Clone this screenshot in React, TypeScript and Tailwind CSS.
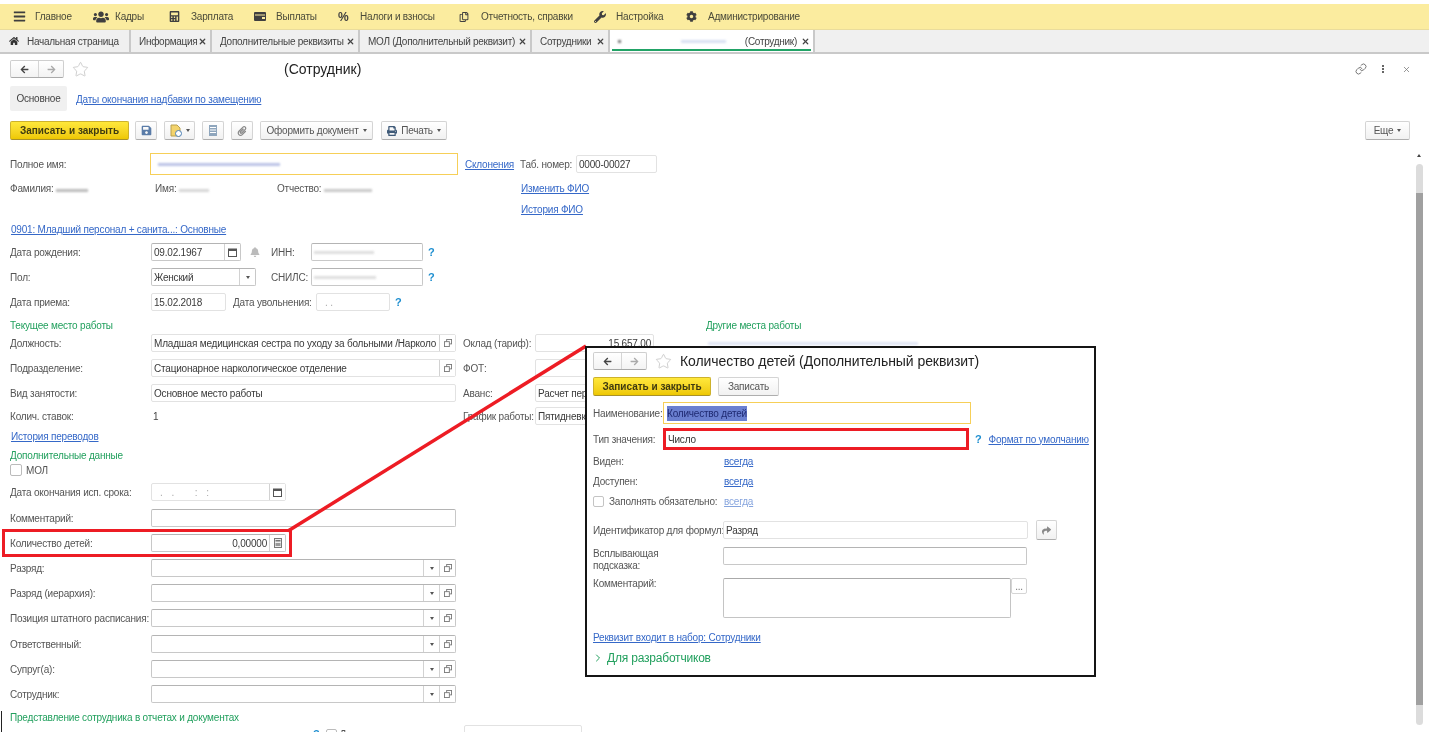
import React from "react";
import { FaBars, FaUsers, FaCalculator, FaRegCopy, FaWrench, FaCog, FaHome, FaArrowLeft, FaArrowRight, FaSave, FaPaperclip, FaPrint, FaBell, FaShare } from "react-icons/fa";
import { Star, Link as LinkIcon, X, ChevronRight } from "lucide-react";

function Caret() {
  return <span className="inline-block w-0 h-0 border-l-[2.5px] border-r-[2.5px] border-t-[3px] border-l-transparent border-r-transparent border-t-[#555]" />;
}
function CalIcon() {
  return (
    <svg width="9" height="9" viewBox="0 0 9 9"><rect x="0.5" y="1" width="8" height="7.5" fill="none" stroke="#555" /><rect x="0.5" y="1" width="8" height="2" fill="#555" /></svg>
  );
}
function CalcIcon() {
  return (
    <svg width="8" height="10" viewBox="0 0 8 10"><rect x="0.5" y="0.5" width="7" height="9" fill="#eee" stroke="#777" /><rect x="1.5" y="2" width="5" height="1.5" fill="#777" /><rect x="1.5" y="5" width="5" height="3" fill="#999" /></svg>
  );
}
function OpenIcon() {
  return (
    <svg width="8" height="8" viewBox="0 0 9 9"><rect x="3" y="0.5" width="5.5" height="5" fill="#fff" stroke="#777" /><rect x="0.5" y="3" width="5.5" height="5.5" fill="#fff" stroke="#777" /></svg>
  );
}
function Smudge({ w, c = "#c4c8d8" }: { w: number; c?: string }) {
  return <span className="inline-block h-[3px] blur-[1px] opacity-80" style={{ width: w, backgroundColor: c }} />;
}
function A({ children, className = "" }: { children: React.ReactNode; className?: string }) {
  return <span className={"underline text-[#3568c8] whitespace-nowrap " + className}>{children}</span>;
}
function Q({ className = "" }: { className?: string }) {
  return <span className={"text-[#1f8fd0] font-bold text-[11px] " + className}>?</span>;
}

function MenuItem({ icon, text, w }: { icon: React.ReactNode; text: string; w: number }) {
  return (
    <div className="flex items-center shrink-0" style={{ width: w }}>
      <span className="w-[22px] flex items-center text-[#3f3f3f]">{icon}</span>
      <span className="whitespace-nowrap">{text}</span>
    </div>
  );
}

function Tab({ children, w, x = true, active = false }: { children: React.ReactNode; w: number; x?: boolean; active?: boolean }) {
  return (
    <div className={"relative h-full flex items-center justify-between pl-[8px] pr-[3px] shrink-0 border-r-2 border-[#c9c9c9] whitespace-nowrap " + (active ? "bg-white" : "")} style={{ width: w }}>
      {children}
      {x && <X size={9} strokeWidth={3.2} className="text-[#444] shrink-0" />}
      {active && <span className="absolute left-[2px] right-[2px] bottom-[1px] h-[2px] bg-[#21a366]" />}
    </div>
  );
}

function Nav() {
  return (
    <div className="flex items-stretch w-[54px] h-[18px] rounded-[2px] border border-[#cfcfcf] border-b-[#aaa] bg-gradient-to-b from-white to-[#f3f3f3] shrink-0">
      <span className="w-[28px] flex items-center justify-center border-r border-[#d5d5d5]"><FaArrowLeft size={9} className="text-[#444]" /></span>
      <span className="flex-1 flex items-center justify-center"><FaArrowRight size={9} className="text-[#aaa]" /></span>
    </div>
  );
}

function Yellow({ w }: { w: number }) {
  return (
    <div className="h-[19px] flex items-center justify-center rounded-[2px] border border-[#cdb22c] border-b-[#a8912a] bg-gradient-to-b from-[#ffe83a] to-[#eec800] text-[10px] tracking-normal text-[#3f3b10] font-bold whitespace-nowrap shrink-0" style={{ width: w }}>
      Записать и закрыть
    </div>
  );
}

function Btn({ children, w, className = "" }: { children: React.ReactNode; w: number; className?: string }) {
  return (
    <div className={"h-[19px] flex items-center justify-center gap-[4px] rounded-[2px] border border-[#d4d4d4] border-b-[#aeaeae] bg-gradient-to-b from-white to-[#f1f1f1] text-[#555] whitespace-nowrap shrink-0 " + className} style={{ width: w }}>
      {children}
    </div>
  );
}

function Field({ w, children, dark = false, right = false, className = "", btns }: { w: number; children?: React.ReactNode; dark?: boolean; right?: boolean; className?: string; btns?: React.ReactNode[] }) {
  return (
    <div className={"h-[18px] flex items-stretch rounded-[2px] border bg-white shrink-0 " + (dark ? "border-[#c8c8c8] border-t-[#b4b4b4] " : "border-[#e2e2e2] ") + className} style={{ width: w }}>
      <div className={"flex-1 min-w-0 flex items-center overflow-hidden whitespace-nowrap px-[2px] text-[#3a3a3a] " + (right ? "justify-end" : "")}>{children}</div>
      {btns && btns.map((b, i) => (
        <div key={i} className="w-[16px] flex items-center justify-center border-l border-[#d2d2d2] bg-white shrink-0">{b}</div>
      ))}
    </div>
  );
}

function Row({ label, children, mt = 7 }: { label?: string; children?: React.ReactNode; mt?: number }) {
  return (
    <div className="h-[18px] flex items-center shrink-0" style={{ marginTop: mt }}>
      <div className="w-[141px] shrink-0 whitespace-nowrap text-[#555]">{label}</div>
      {children}
    </div>
  );
}

function Green({ children, className = "" }: { children: React.ReactNode; className?: string }) {
  return <div className={"text-[#22a05e] whitespace-nowrap " + className}>{children}</div>;
}

function Lbl({ children, w, className = "" }: { children: React.ReactNode; w: number; className?: string }) {
  return <div className={"shrink-0 whitespace-nowrap text-[#555] " + className} style={{ width: w }}>{children}</div>;
}

export default function App() {
  const dropBtns = [<Caret key="c" />, <OpenIcon key="o" />];
  return (
    <div className="relative w-[1429px] h-[732px] overflow-hidden bg-white text-[10px] tracking-[-0.2px] blur-[0.4px]" style={{ fontFamily: '"Liberation Sans", Arial, sans-serif' }}>
      {/* Section menu */}
      <div className="mt-[4px] h-[26px] bg-[#fbec9f] border-b border-[#e9dc9c] flex items-center pl-[13px] text-[#4a4a3a]">
        <MenuItem w={80} text="Главное" icon={<FaBars size={13} />} />
        <MenuItem w={76} text="Кадры" icon={<FaUsers size={16} />} />
        <MenuItem w={85} text="Зарплата" icon={<FaCalculator size={11} />} />
        <MenuItem w={84} text="Выплаты" icon={<svg width="12" height="9" viewBox="0 0 12 9"><rect width="12" height="9" rx="1" fill="#3f3f3f" /><rect x="1" y="2.5" width="10" height="1" fill="#fbec9f" /><rect x="8" y="5" width="3" height="2" fill="#fbec9f" /></svg>} />
        <MenuItem w={121} text="Налоги и взносы" icon={<span className="text-[12px] font-bold leading-none">%</span>} />
        <MenuItem w={135} text="Отчетность, справки" icon={<FaRegCopy size={10} />} />
        <MenuItem w={92} text="Настройка" icon={<FaWrench size={12} />} />
        <MenuItem w={120} text="Администрирование" icon={<FaCog size={11} />} />
      </div>
      {/* Open windows */}
      <div className="h-[24px] bg-[#f0f0f0] border-b-2 border-[#c9c9c9] flex items-stretch text-[#444] tracking-[-0.28px]">
        <Tab w={131} x={false}><span className="flex items-center gap-[8px] pl-[1px]"><FaHome size={10} className="text-[#333]" />Начальная страница</span></Tab>
        <Tab w={81}>Информация</Tab>
        <Tab w={148}>Дополнительные реквизиты</Tab>
        <Tab w={172}>МОЛ (Дополнительный реквизит)</Tab>
        <Tab w={78}>Сотрудники</Tab>
        <Tab w={205} active>
          <span className="flex items-center w-full justify-between pr-[4px]"><span className="flex items-center gap-[60px]"><Smudge w={3} c="#555" /><Smudge w={45} c="#cfd8ee" /></span><span>(Сотрудник)</span></span>
        </Tab>
      </div>

      {/* Form */}
      <div className="flex flex-col pl-[10px]">
        <div className="h-[18px] mt-[6px] flex items-center shrink-0">
          <Nav />
          <Star size={17} strokeWidth={1} className="ml-[8px] text-[#bdbdbd]" />
          <span className="ml-[195px] text-[14px] tracking-normal text-[#222] whitespace-nowrap">(Сотрудник)</span>
          <div className="ml-auto mr-[18px] flex items-center text-[#777]">
            <LinkIcon size={12} />
            <span className="ml-[15px] flex flex-col gap-[1px]"><i className="block w-[2px] h-[2px] bg-[#666]" /><i className="block w-[2px] h-[2px] bg-[#666]" /><i className="block w-[2px] h-[2px] bg-[#666]" /></span>
            <X size={9} className="ml-[18px]" />
          </div>
        </div>
        <div className="h-[25px] mt-[8px] flex items-center shrink-0">
          <div className="w-[57px] h-full bg-[#f0f0f0] rounded-[2px] flex items-center justify-center text-[#444]">Основное</div>
          <A className="ml-[9px] mt-[1px]">Даты окончания надбавки по замещению</A>
        </div>
        <div className="h-[19px] mt-[10px] flex items-center shrink-0">
          <Yellow w={119} />
          <Btn w={22} className="ml-[6px]"><FaSave size={11} className="text-[#5a7ca8]" /></Btn>
          <Btn w={31} className="ml-[7px]">
            <svg width="12" height="13" viewBox="0 0 12 13"><path d="M1 1h6l3 3v8H1z" fill="#f3d36b" stroke="#b8a050" /><circle cx="8.5" cy="9.5" r="3" fill="#fff" stroke="#4a7fb5" /></svg>
            <Caret />
          </Btn>
          <Btn w={22} className="ml-[7px]">
            <svg width="8" height="11" viewBox="0 0 8 11"><rect width="8" height="11" fill="#8fa6bd" /><path d="M1 2.5h6M1 5h6M1 7.5h6" stroke="#fff" /></svg>
          </Btn>
          <Btn w={22} className="ml-[7px]"><FaPaperclip size={10} className="text-[#888]" /></Btn>
          <Btn w={113} className="ml-[7px]">Оформить документ <Caret /></Btn>
          <Btn w={66} className="ml-[8px]"><FaPrint size={10} className="text-[#3f5a78]" />Печать <Caret /></Btn>
          <Btn w={45} className="ml-auto mr-[19px]">Еще <Caret /></Btn>
        </div>
        <div className="h-[22px] mt-[13px] flex items-center shrink-0">
          <div className="w-[140px] shrink-0 text-[#555]">Полное имя:</div>
          <div className="w-[308px] h-full border-[1.5px] border-[#f6cf58] flex items-center pl-[7px] shrink-0"><Smudge w={122} c="#aab4e0" /></div>
          <span className="ml-[7px] w-[55px] shrink-0"><A>Склонения</A></span>
          <span className="w-[56px] shrink-0 text-[#555] whitespace-nowrap">Таб. номер:</span>
          <Field w={81}>0000-00027</Field>
        </div>
        <div className="h-[20px] mt-[3px] flex items-center shrink-0">
          <Lbl w={145}>Фамилия: <Smudge w={32} c="#aaa" /></Lbl>
          <Lbl w={122}>Имя: <Smudge w={30} c="#ccc" /></Lbl>
          <Lbl w={244}>Отчество: <Smudge w={48} c="#bbb" /></Lbl>
          <A>Изменить ФИО</A>
        </div>
        <div className="h-[20px] mt-[1px] flex items-center pl-[511px] shrink-0"><A>История ФИО</A></div>
        <div className="h-[20px] flex items-center pl-[1px] shrink-0"><A>0901: Младший персонал + санита...: Основные</A></div>

        <Row label="Дата рождения:" mt={4}>
          <Field w={90} dark btns={[<CalIcon key="c" />]}>09.02.1967</Field>
          <FaBell size={10} className="ml-[9px] text-[#bbb] shrink-0" />
          <Lbl w={40} className="ml-[11px]">ИНН:</Lbl>
          <Field w={112} dark><Smudge w={60} c="#d5d5d5" /></Field>
          <Q className="ml-[5px]" />
        </Row>
        <Row label="Пол:">
          <Field w={105} dark btns={[<Caret key="c" />]}>Женский</Field>
          <Lbl w={40} className="ml-[15px]">СНИЛС:</Lbl>
          <Field w={112} dark><Smudge w={62} c="#d5d5d5" /></Field>
          <Q className="ml-[5px]" />
        </Row>
        <Row label="Дата приема:">
          <Field w={75}>15.02.2018</Field>
          <Lbl w={83} className="ml-[7px]">Дата увольнения:</Lbl>
          <Field w={74}><span className="pl-[6px] text-[#aaa]">. .</span></Field>
          <Q className="ml-[5px]" />
        </Row>
        <div className="h-[16px] mt-[6px] flex items-center shrink-0">
          <Green className="w-[696px]">Текущее место работы</Green>
          <Green>Другие места работы</Green>
        </div>
        <Row mt={1} label="Должность:">
          <Field w={305} btns={[<OpenIcon key="o" />]}>Младшая медицинская сестра по уходу за больными /Нарколо</Field>
          <Lbl w={72} className="ml-[7px]">Оклад (тариф):</Lbl>
          <Field w={119} right>15 657,00</Field>
          <span className="ml-[54px] -mt-[4px]"><Smudge w={210} c="#d8def2" /></span>
        </Row>
        <Row label="Подразделение:">
          <Field w={305} btns={[<OpenIcon key="o" />]}>Стационарное наркологическое отделение</Field>
          <Lbl w={72} className="ml-[7px]">ФОТ:</Lbl>
          <Field w={119} />
        </Row>
        <Row label="Вид занятости:">
          <Field w={305}>Основное место работы</Field>
          <Lbl w={72} className="ml-[7px]">Аванс:</Lbl>
          <Field w={119}>Расчет пер</Field>
        </Row>
        <Row mt={5} label="Колич. ставок:">
          <span className="w-[305px] pl-[2px] text-[#444] shrink-0">1</span>
          <Lbl w={72} className="ml-[7px]">График работы:</Lbl>
          <Field w={119}>Пятидневк</Field>
        </Row>
        <div className="h-[18px] mt-[2px] flex items-center pl-[1px] shrink-0"><A>История переводов</A></div>
        <Green className="h-[16px] mt-[2px] flex items-center shrink-0">Дополнительные данные</Green>
        <div className="h-[14px] flex items-center gap-[4px] shrink-0 text-[#555]">
          <span className="w-[12px] h-[12px] border border-[#bbb] rounded-[2px] bg-white" />МОЛ
        </div>
        <Row mt={6} label="Дата окончания исп. срока:">
          <Field w={135} btns={[<CalIcon key="c" />]}><span className="pl-[6px] text-[#aaa] tracking-[3px]">. . &nbsp; : :</span></Field>
        </Row>
        <Row mt={8} label="Комментарий:"><Field w={305} dark /></Row>
        <Row label="Количество детей:">
          <Field w={135} dark right btns={[<CalcIcon key="c" />]}>0,00000</Field>
        </Row>
        <Row label="Разряд:"><Field w={305} dark btns={dropBtns} /></Row>
        <Row label="Разряд (иерархия):"><Field w={305} dark btns={dropBtns} /></Row>
        <Row label="Позиция штатного расписания:"><Field w={305} dark btns={dropBtns} /></Row>
        <Row mt={8} label="Ответственный:"><Field w={305} dark btns={dropBtns} /></Row>
        <Row label="Супруг(а):"><Field w={305} dark btns={dropBtns} /></Row>
        <Row label="Сотрудник:"><Field w={305} dark btns={dropBtns} /></Row>
        <Green className="h-[16px] mt-[6px] flex items-center shrink-0">Представление сотрудника в отчетах и документах</Green>
        <div className="h-[18px] flex items-center pl-[303px] shrink-0">
          <Q />
          <span className="ml-[6px] w-[11px] h-[11px] border border-[#bbb] rounded-[2px] shrink-0" />
          <span className="ml-[3px] text-[#555]">Д</span>
          <Field w={118} className="ml-[118px]" />
        </div>
      </div>

      {/* Scroll bar */}
      <div className="absolute left-[1416px] top-[154px] w-[7px] h-[571px]">
        <span className="absolute left-[1px] top-0 w-0 h-0 border-l-[2.5px] border-r-[2.5px] border-b-[3px] border-l-transparent border-r-transparent border-b-[#444]" />
        <div className="absolute left-0 right-0 top-[10px] bottom-0 rounded-full bg-[#dcdcdc]">
          <div className="absolute left-0 right-0 top-[29px] h-[512px] bg-[#a0a0a0]" />
        </div>
      </div>

      {/* Stray cursor line */}
      <span className="absolute left-[1px] top-[711px] w-px h-[21px] bg-[#222]" />

      {/* Annotations */}
      <svg className="absolute inset-0 pointer-events-none" width="1429" height="732" viewBox="0 0 1429 732">
        <line x1="288" y1="531" x2="586" y2="346" stroke="#ed1c24" strokeWidth="3.5" />
      </svg>
      <div className="absolute left-[2px] top-[529px] w-[290px] h-[28px] border-[3px] border-[#ed1c24]" />

      {/* Pasted window */}
      <div className="absolute left-[585px] top-[346px] w-[511px] h-[331px] border-2 border-[#151515] bg-white flex flex-col pl-[6px]">
        <div className="mt-[4px] h-[18px] flex items-center shrink-0">
          <Nav />
          <Star size={17} strokeWidth={1} className="ml-[8px] text-[#bdbdbd]" />
          <span className="ml-[8px] text-[14px] tracking-[-0.07px] text-[#222] whitespace-nowrap">Количество детей (Дополнительный реквизит)</span>
        </div>
        <div className="mt-[7px] h-[19px] flex items-center shrink-0">
          <Yellow w={118} />
          <Btn w={61} className="ml-[7px]">Записать</Btn>
        </div>
        <div className="mt-[6px] h-[22px] flex items-center shrink-0">
          <Lbl w={70}>Наименование:</Lbl>
          <div className="w-[308px] h-full border-[1.5px] border-[#f6cf58] flex items-center pl-[3px] shrink-0">
            <span className="bg-[#6a7fd0] text-[#1f2a72] whitespace-nowrap">Количество детей</span>
          </div>
        </div>
        <div className="mt-[4px] h-[22px] flex items-center shrink-0">
          <Lbl w={70}>Тип значения:</Lbl>
          <div className="w-[306px] h-full border-[3px] border-[#ed1c24] flex items-center pl-[2px] text-[#333] shrink-0">Число</div>
          <Q className="ml-[6px]" />
          <A className="ml-[7px]">Формат по умолчанию</A>
        </div>
        <div className="mt-[1px] h-[20px] flex items-center shrink-0">
          <Lbl w={131}>Виден:</Lbl><A>всегда</A>
        </div>
        <div className="h-[20px] flex items-center shrink-0">
          <Lbl w={131}>Доступен:</Lbl><A>всегда</A>
        </div>
        <div className="h-[20px] flex items-center shrink-0">
          <span className="w-[11px] h-[11px] border border-[#c4c4c4] rounded-[2px] shrink-0" />
          <Lbl w={115} className="ml-[5px]">Заполнять обязательно:</Lbl>
          <A className="opacity-60">всегда</A>
        </div>
        <div className="mt-[9px] h-[20px] flex items-center shrink-0">
          <Lbl w={130}>Идентификатор для формул:</Lbl>
          <Field w={305}>Разряд</Field>
          <Btn w={21} className="ml-[8px] !h-[20px]"><FaShare size={9} className="text-[#888]" /></Btn>
        </div>
        <div className="mt-[7px] h-[29px] flex items-start shrink-0">
          <Lbl w={130} className="leading-[12px] pt-[1px] whitespace-normal">Всплывающая<br />подсказка:</Lbl>
          <Field w={304} dark />
        </div>
        <div className="mt-[2px] h-[40px] flex items-start shrink-0">
          <Lbl w={130} className="leading-[12px]">Комментарий:</Lbl>
          <div className="w-[288px] h-[40px] border border-[#c4c4c4] border-t-[#aaa] rounded-[2px] shrink-0" />
          <div className="w-[16px] h-[16px] border border-[#d5d5d5] rounded-[2px] flex items-center justify-center text-[#777] shrink-0">...</div>
        </div>
        <div className="mt-[12px] h-[14px] flex items-center shrink-0"><A>Реквизит входит в набор: Сотрудники</A></div>
        <div className="mt-[5px] h-[18px] flex items-center shrink-0 text-[12px] text-[#22a05e] whitespace-nowrap">
          <ChevronRight size={12} strokeWidth={2} className="mr-[3px] -ml-[1px]" />Для разработчиков
        </div>
      </div>
    </div>
  );
}
